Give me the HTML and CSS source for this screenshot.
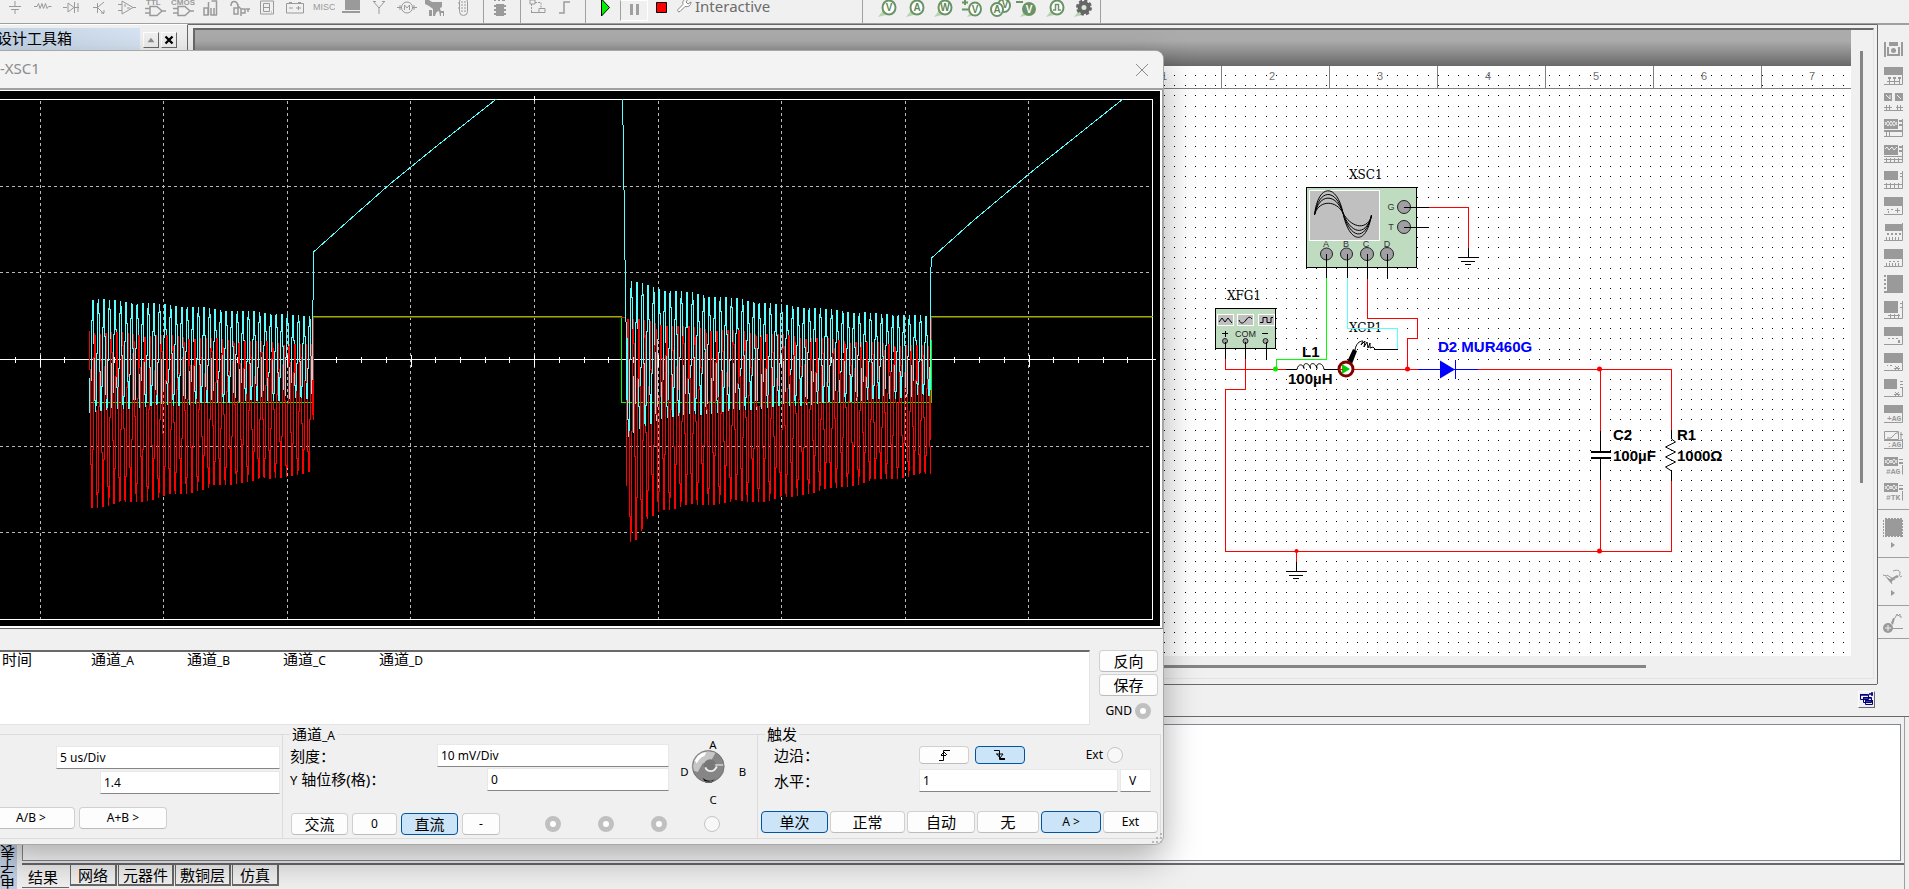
FILE: index.html
```html
<!DOCTYPE html>
<html lang="zh-CN">
<head>
<meta charset="utf-8">
<title>XSC1</title>
<link rel="stylesheet" href="styles.css">
</head>
<body>
<div class="app">
  <header class="toolbar">
    <svg class="tool" viewBox="0 0 24 22"><path d="M12 1v5M6 6.500h12M8 9.500h8M12 10v4"/></svg>
    <svg class="tool" viewBox="0 0 24 22"><path d="M3 6.500h3l1.500-3 1.500 5 2-5 1.500 5 2-5 1.500 5 1.500-2h3"/></svg>
    <svg class="tool" viewBox="0 0 24 22"><path d="M4 7.500h4M9 3v9l6-4.500zM15.500 2v11M16 7.500h4M19 3v9"/></svg>
    <svg class="tool" viewBox="0 0 24 22"><path d="M6 7.500h4M10.500 3v10M11 7l6-5M11 8l6 6M14 13h3v-3"/></svg>
    <svg class="tool" viewBox="0 0 24 22"><path d="M3 4.500h4M3 10.500h4M7 1v13l11-6.500zM18 7.500h3M10 4v3M12 8h3"/></svg>
    <svg class="tool" viewBox="0 0 24 22"><text x="3" y="5" class="tiny">TTL</text><path stroke-width="1.500" d="M2 8.500h5M2 13h5M7 6.500v9h7l5-4.500-5-4.500zM19 11h4"/></svg>
    <svg class="tool" viewBox="0 0 24 22"><text x="0" y="5" class="tiny">CMOS</text><path stroke-width="1.500" d="M2 8.500h5M2 13h5M7 6.500v9h7l5-4.500-5-4.500zM19 11h4"/></svg>
    <svg class="tool" viewBox="0 0 24 22"><path stroke-width="1.500" d="M9.500 2v13M5 8h4v7H5zM12 8v7h3V8M17.500 15V1h-5M15 15h3"/></svg>
    <svg class="tool" viewBox="0 0 24 22"><path stroke-width="1.500" d="M4 6c0-6 6-6 7 0l3 3M7 8h4v6H7zM11 4v10M14 9v7M14 9h4v4h-4M19 9h4M21 9v3"/></svg>
    <svg class="tool" viewBox="0 0 24 22"><path d="M5.500 1h13v13h-13zM8.500 3.500h6v8h-6zM9 7.500h6M16 12h1"/></svg>
    <svg class="tool" viewBox="0 0 24 22"><path d="M3.500 3.500h17v9.500h-17zM6 2.500h3M15 2.500h3M6 8h4M13 8h5M15.500 6v4"/></svg>
    <svg class="tool" viewBox="0 0 24 22"><text x="2" y="10" class="misc">MISC</text></svg>
    <svg class="tool" viewBox="0 0 24 22"><path class="solid" d="M6 0h15v10H6zM3 11h18v2H3z"/></svg>
    <svg class="tool" viewBox="0 0 24 22"><path d="M12 7v7M6 1l6 7 6-7M6 1.500h3M15 1.500h3"/></svg>
    <svg class="tool" viewBox="0 0 24 22"><circle cx="12" cy="7.500" r="5.500"/><path d="M2 7.500h5M17 7.500h5M9.500 10V5l2.500 3 2.500-3v5M5 5v5M19 5v5"/></svg>
    <svg class="tool" viewBox="0 0 24 22"><path class="solid" d="M2 0h4l3 2h10v5l-2 1 1 4-3-1-2 2-1 3h-2V9L6 6l-4-2zM6 10h3v6H6zM16 11h5v5h-1v-3h-2v3h-1z"/></svg>
    <svg class="tool" viewBox="0 0 24 22"><rect x="8.500" y="-2.500" width="8" height="18" rx="4"/><path d="M10 2h2M13 2h2M10 5h2M13 5h2M10 8h2M13 8h2M10 11h2M13 11h2M7 3h1M7 8h1"/></svg>
    <i class="sep"></i>
    <svg class="tool" viewBox="0 0 24 22"><path class="solid" d="M8 4h8v12H8zM6 5h2v2H6zM6 9h2v2H6zM6 13h2v2H6zM16 5h2v2h-2zM16 9h2v2h-2zM16 13h2v2h-2zM6 0h2v1H6zM10 0h2v1h-2zM14 0h3v1h-3z"/></svg>
    <i class="sep"></i>
    <svg class="tool" viewBox="0 0 24 22"><path d="M5 0h5v4H5zM14 8.500h6v4h-6zM6 12.500h8"/><path stroke-dasharray="2 1" d="M6.500 4v8M10 2.500h6v6"/></svg>
    <svg class="tool" viewBox="0 0 24 22"><path stroke-width="1.500" d="M6 13h5V2h6"/></svg>
    <i class="sep"></i>
    <button class="run" aria-label="运行"><svg viewBox="0 0 24 22"><path d="M7.500-1v17l8-8.500z" fill="#00f000" stroke="#000"/></svg></button>
    <button class="run pause" aria-label="暂停"><svg viewBox="0 0 24 22"><path d="M8 3h3v11H8zM14 3h3v11h-3z" fill="#a0a0a0"/></svg></button>
    <button class="run" aria-label="停止"><svg viewBox="0 0 24 22"><path d="M6.500 2.500h10v10h-10z" fill="#f00" stroke="#000"/></svg></button>
    <button class="mode"><svg viewBox="0 0 16 22"><path d="M2 9.500l5-5C6 1 8-1 12-1l-2 3 2 2 3-2c0 4-3 5-6 4.500l-5 5c-2 1-3-1-2-2z" fill="#fff" stroke="#858585"/></svg>Interactive</button>
    <i class="sep"></i>
    <div class="probes">
      <svg class="probe" viewBox="0 0 24 22"><path class="tail" d="M2 17l7-9 5 6z"/><ellipse cx="13" cy="7.500" rx="6.500" ry="7"/><text x="13" y="11">V</text></svg>
      <svg class="probe" viewBox="0 0 24 22"><path class="tail" d="M2 17l7-9 5 6z"/><ellipse cx="13" cy="7.500" rx="6.500" ry="7"/><text x="13" y="11">A</text></svg>
      <svg class="probe" viewBox="0 0 24 22"><path class="tail" d="M2 17l7-9 5 6z"/><ellipse cx="13" cy="7.500" rx="6.500" ry="7"/><text x="13" y="11">W</text></svg>
      <svg class="probe" viewBox="0 0 24 22"><path d="M2 2.500h6M5 0v5M2 9.500h6"/><path class="tail" d="M7 17l7-9 5 6z"/><ellipse cx="15" cy="9" rx="6" ry="6.500"/><text x="15" y="13">V</text></svg>
      <svg class="probe" viewBox="0 0 24 22"><ellipse cx="16" cy="5.500" rx="6" ry="6.500"/><text x="17" y="8">V</text><ellipse cx="9" cy="9.500" rx="6" ry="6.500"/><text x="9" y="13">A</text></svg>
      <svg class="probe" viewBox="0 0 24 22"><path d="M0 2h7" stroke-width="2"/><path class="tail" d="M4 17l7-9 5 6z"/><ellipse class="dark" cx="13" cy="9" rx="6" ry="6"/><text class="light" x="13" y="13">V</text></svg>
      <svg class="probe" viewBox="0 0 24 22"><path class="tail" d="M2 17l7-9 5 6z"/><ellipse cx="13" cy="7.500" rx="6.500" ry="7"/><path stroke-width="1.500" d="M9 10h2.500V4.500h3V10H17"/></svg>
      <svg class="probe" viewBox="0 0 24 22"><path class="tail" d="M2 17l7-9 5 6z"/><circle class="gear" cx="12" cy="7.500" r="4.500"/><circle class="teeth" cx="12" cy="7.500" r="6.500"/></svg>
    </div>
  </header>

  <main class="body">
    <aside class="toolbox">
      <div class="caption"><h2>设计工具箱</h2></div>
      <button class="mini" aria-label="折叠"><svg viewBox="0 0 12 12"><path d="M3 8l3-4 3 4z" fill="#909090"/></svg></button>
      <button class="mini" aria-label="关闭"><svg viewBox="0 0 12 12"><path d="M3 3l6 6M9 3l-6 6" stroke="#000" stroke-width="2"/></svg></button>
    </aside>
    <section class="workspace">
      <div class="canvas">
        <div class="backdrop"></div>
        <svg class="sheet">
          <g transform="translate(-195 -66)">
            <g id="dots" fill="#000"></g>
            <g class="ruler">
              <path d="M195 88.500H2400M1221.500 66v22M1329.500 66v22M1437.500 66v22M1545.500 66v22M1653.500 66v22M1761.500 66v22"/>
              <text x="1164" y="80">1</text><text x="1272" y="80">2</text><text x="1380" y="80">3</text><text x="1488" y="80">4</text><text x="1596" y="80">5</text><text x="1704" y="80">6</text><text x="1812" y="80">7</text>
            </g>
            <g class="wire red">
              <path d="M1429 207.500h39.500v41M1367.500 279v39.500h50v20h-10v31M1225.500 359v10.500h61M1245.500 359v30.500h-20v162h446V481M1354 369.500h64M1478 369.500h193.500V430M1600.500 369v62M1600.500 480v71M1296.500 551v11"/>
            </g>
            <path class="wire green" d="M1326.500 278v81.500h-50v10"/>
            <text class="inst" x="1349" y="332">XCP1</text>
            <path class="wire cyan" d="M1347.500 278v50.500h50v21"/>
            <path class="wire blue" d="M1418 369.500h60M1455.500 360v19"/>
            <path d="M1440 360.500v18l15-9z" fill="#00f"/>
            <g class="wire black">
              <path d="M1468.500 248v9M1458 257.500h21M1461 261.500h14M1465 264.500h6M1296.500 562v9M1286 571.500h21M1289 575.500h14M1293 578.500h6M1286 369.500h11M1324 369.500h14M1671.500 430v9M1671.500 471v10M1600.500 431v21M1600.500 459v21M1374 349.500h24"/>
              <path stroke-width="2" d="M1591 452h20M1591 458h20"/>
            </g>
            <path class="curve" d="M1297 369.500c1-6 6-6 7-1c-2-6 5-7 6.500 0c-2-6 5-7 6.500 0c-2-6 6-7 7 1"/>
            <path class="curve" d="M1671.500 439l4 3-10 5 10 5-10 5 10 5-10 5 6 4"/>
            <g fill="#f00"><circle cx="1407.500" cy="369" r="2.500"/><circle cx="1599.500" cy="369" r="2.500"/><circle cx="1599.500" cy="551" r="2.500"/><circle cx="1296.500" cy="551" r="2"/></g>
            <circle cx="1275.500" cy="369" r="2.500" fill="#0e0"/>
            <path d="M1346 364l7-15 4 2-5 13z"/>
            <path class="curve" d="M1355 350c1-6 4-9 8-9l-2 4 4-4-1 6 3-5 1 6 2-5v5l3-1 2 2"/>
            <circle cx="1346" cy="369" r="7" fill="#fff" stroke="#800000" stroke-width="3"/>
            <path d="M1342 364v10l8-5z" fill="#0c0"/>
            <path d="M1339 369.500h4" stroke="#f00"/>

            <rect class="box" x="1306.500" y="187.500" width="110" height="80"/>
            <rect class="lcd" x="1309.500" y="190.500" width="70" height="50"/>
            <path class="curve" d="M1314.500 215C1318 183 1337 183 1343 213S1366 247 1371.500 215M1314.500 215C1319 188 1336 188 1343 213S1365 243 1371.500 215M1315 214C1319 193 1336 193 1343 213S1365 238 1371.500 216M1315 213C1320 200 1336 200 1343 213S1365 232 1371.500 217"/>
            <g class="jack">
              <circle cx="1404" cy="207" r="6.500"/><circle cx="1404" cy="227" r="6.500"/>
              <circle cx="1326.500" cy="254" r="6"/><circle cx="1346.500" cy="254" r="6"/><circle cx="1367" cy="254" r="6.500"/><circle cx="1387" cy="254" r="6.500"/>
            </g>
            <path class="wire black" d="M1404 207.500h25M1404 227.500h25M1326.500 254v24M1347.500 254v24M1367.500 254v25M1387.500 254v25"/>
            <g class="pin"><text x="1391" y="210">G</text><text x="1391" y="230">T</text><text x="1326" y="247">A</text><text x="1346" y="247">B</text><text x="1366" y="247">C</text><text x="1387" y="247">D</text></g>
            <rect class="box" x="1215.500" y="308.500" width="60" height="40"/>
            <rect class="lcd" x="1217.500" y="314.500" width="16" height="11"/><rect class="lcd" x="1237.500" y="314.500" width="16" height="11"/><rect class="lcd" x="1258.500" y="314.500" width="16" height="11"/>
            <path class="curve" d="M1219 322l3-4 3 4 3-4 4 5M1239 320c2 5 5 3 7 0s4-4 6-1M1260 322.500h3v-5h4v5h4v-5h2"/>
            <g class="jack"><circle cx="1225" cy="341" r="2.500"/><circle cx="1245.500" cy="341" r="2.500"/><circle cx="1265.500" cy="341" r="2.500"/></g>
            <path class="wire black" d="M1225.500 342v17M1245.500 342v17M1266.500 342v17M1222 333.500h6M1225.500 331v6M1262 333.500h6"/>
            <text class="com" x="1245.500" y="337">COM</text>
            <text class="inst" x="1349" y="179">XSC1</text>
            <text class="inst" x="1227" y="300">XFG1</text>
            <g class="part">
              <text x="1302" y="357">L1</text><text x="1288" y="384">100µH</text>
              <text x="1438" y="352" fill="#00f">D2 MUR460G</text>
              <text x="1613" y="440">C2</text><text x="1613" y="461">100µF</text>
              <text x="1677" y="440">R1</text><text x="1677" y="461">1000Ω</text>
            </g>
          </g>
        </svg>
        <div class="vbar"><i></i></div>
        <div class="hbar"><i></i></div>
      </div>
      <div class="status"><button class="cascade" aria-label="窗口"><svg viewBox="0 0 15 15"><path d="M1.500 2.500h8v5h-8zM4.500 5.500h8v5h-8zM6.500 8.500h7v4h-7z" fill="#f0f0f0" stroke="#000080"/><path d="M1 3h8M4 6h8M6 9h8M10 2h4M13 0v4" stroke="#000080" stroke-width="1.500"/></svg></button></div>
    </section>
    <nav class="instruments">
      <div class="strip">
        <svg viewBox="0 0 19 18"><path d="M0 1h2v15H0zM17 1h2v14h-2zM5 1h9v4H5zM3 6h2v9H3zM14 6h2v9h-2zM5 13h9v2H5z"/><circle cx="9.500" cy="9.500" r="2.500"/></svg>
        <svg viewBox="0 0 19 18"><path d="M0 0h19v8H0zM4 10h3v2H4zM9 10h3v2H9zM14 10h3v2h-3zM3 14h13v1H3zM5 12h1v5H5zM10 12h1v5h-1zM15 12h1v5h-1z"/><path class="edge" d="M18.500 8v9.500H0"/></svg>
        <svg viewBox="0 0 19 18"><path d="M0 0h8v8H0zM11 0h8v8h-8zM0 14h8v1H0zM12 14h7v1h-7zM2 12h1v5H2zM5 12h1v5H5zM13 12h1v5h-1zM16 12h1v5h-1z"/><path class="hole" d="M2 2l4 4V2M13 2l4 4"/><path class="edge" d="M0 17.500h19"/></svg>
        <svg viewBox="0 0 19 18"><path d="M0 0h14v10H0zM15 1h4v2h-4zM15 5h4v2h-4zM0 11h19v2H0zM2 13h1v4H2zM5 13h1v4H5z"/><path class="hole" d="M1 3l3 4 3-5 3 5 3-4M1 6l3-4 3 5 3-5 3 4"/><path class="edge" d="M18.500 0v17.500H0"/></svg>
        <svg viewBox="0 0 19 18"><path d="M0 0h14v10H0zM15 1h4v2h-4zM15 5h4v2h-4zM0 11h19v1H0zM2 13h1v4H2zM6 13h1v4H6zM10 13h1v4h-1zM14 13h1v4h-1z"/><path class="hole" d="M1 4l2-2 2 3 3-3 2 3 3-3"/><path class="edge" d="M18.500 0v17.500H0M0 14.500h19"/></svg>
        <svg viewBox="0 0 19 18"><path d="M0 0h14v9H0zM16 2h3v1h-3zM16 5h3v1h-3zM2 12h1v5H2zM6 12h1v5H6zM10 12h1v5h-1zM14 12h1v5h-1z"/><path class="edge" d="M18.500 0v17.500H0M0 13.500h19"/></svg>
        <svg viewBox="0 0 19 18"><path d="M0 0h19v9H0zM3 12h2v1H3zM7 12h2v1H7zM11 13h5v1h-5zM13 11h1v5h-1zM4 14h1v2H4z"/><path class="edge" d="M18.500 9v8.500H0"/></svg>
        <svg viewBox="0 0 19 18"><path d="M1 1h17v7H1zM3 10h2v2H3zM7 10h2v2H7zM11 10h2v2h-2zM15 10h2v2h-2zM2 14h1v4H2zM5 14h1v4H5zM8 14h1v4H8zM11 14h1v4h-1zM14 14h1v4h-1z"/><path class="edge" d="M18.500 0v17.500H0"/></svg>
        <svg viewBox="0 0 19 18"><path d="M0 0h19v10H0zM5 12h2v1H5zM9 12h2v1H9zM13 12h2v1h-2zM2 14h1v4H2zM5 14h1v4H5zM8 14h1v4H8zM11 14h1v4h-1zM14 14h1v4h-1z"/><path class="edge" d="M18.500 9v8.500H0"/></svg>
        <svg viewBox="0 0 19 18"><path d="M3 0h16v18H3zM0 0h2v2H0zM0 4h2v2H0zM0 8h2v2H0zM0 12h2v2H0zM0 16h3v2H0z"/></svg>
        <svg viewBox="0 0 19 18"><path d="M0 0h14v12H0zM16 2h3v1h-3zM16 6h3v1h-3zM4 14h12v1H4zM6 13h1v4H6zM10 13h1v4h-1zM14 13h1v4h-1z"/><path class="edge" d="M18.500 0v17.500H0"/></svg>
        <svg viewBox="0 0 19 18"><path d="M0 0h19v9H0zM4 11h2v1H4zM8 11h2v1H8zM12 11h2v1h-2zM14 13h2v3h-2z"/><path class="edge" d="M18.500 9v8.500H0"/></svg>
        <svg viewBox="0 0 19 18"><path d="M0 0h19v10H0zM3 12h1v1H3zM6 12h2v1H6z"/><path class="edge" d="M18.500 9v8.500H0M10 15.500h6M11 13l4 4M15 13l-4 4"/></svg>
        <svg viewBox="0 0 19 18"><path d="M0 0h13v10H0zM16 2h3v1h-3zM16 5h3v1h-3zM16 8h3v1h-3z"/><path class="edge" d="M18.500 9v8.500H0M10 15.500h6M11 13l4 4M15 13l-4 4"/></svg>
        <svg viewBox="0 0 19 18"><path d="M0 0h19v8H0z"/><text x="3" y="16">+AG</text><path class="edge" d="M18.500 8v9.500H0"/></svg>
        <svg viewBox="0 0 19 18"><path class="edge" d="M.500.500h14v8H.500zM3 7h4l5-5h3M16 3.500h3M17 1v9M18.500 8v9.500H0M0 9.500h18"/><text x="3" y="16">:AG</text></svg>
        <svg viewBox="0 0 19 18"><path d="M0 0h14v9H0zM15 2h4v1h-4zM15 5h4v2h-4z"/><path class="hole" d="M1 3l3 4 3-4 3 4 3-4M1 6l3-4 3 4 3-4 3 4"/><text x="2" y="17">#AG</text><path class="edge" d="M18.500 8v9.500"/></svg>
        <svg viewBox="0 0 19 18"><path d="M0 0h14v9H0zM15 2h4v1h-4zM15 5h4v2h-4z"/><path class="hole" d="M1 3l3 4 3-4 3 4 3-4M1 6l3-4 3 4 3-4 3 4"/><text x="2" y="17">#TK</text><path class="edge" d="M18.500 8v9.500"/></svg>
      </div>
      <div class="extra"><svg viewBox="0 0 20 32"><path d="M2 1h17v17H2z"/><path class="dash" d="M2 .500h17M2 18.500h17M.500 2v17M19.500 2v17"/><path d="M8 24l4 3-4 3z"/></svg></div>
      <div class="extra"><svg viewBox="0 0 20 32"><path d="M2 10l5 3 7-4 2 2-5 2-3 4-2-2z"/><path class="edge" d="M10 5c5-2 9 0 6 5M0 9l4 1M17 11l2-1M4 9l8 5M6 13l3 5"/><path d="M8 24l4 3-4 3z"/></svg></div>
      <div class="extra last"><svg viewBox="0 0 20 32"><circle cx="5" cy="16" r="5"/><path d="M8 11l2-5h2l-2 7z"/><path class="edge" d="M12 6l2-4 1 2 2-2v3h2M8 16.500h12"/><path class="hole" d="M2 16h6M5 13v6"/></svg></div>
    </nav>
  </main>

  <footer class="results">
    <div class="side"><span>电子表格视图</span></div>
    <div class="main">
      <div class="output"></div>
      <div class="tabs"><button class="on">结果</button><button>网络</button><button>元器件</button><button>敷铜层</button><button>仿真</button></div>
    </div>
  </footer>

  <section class="scope" aria-label="XSC1">
    <div class="titlebar"><h1>-XSC1</h1><button class="close" aria-label="关闭"><svg viewBox="0 0 14 14"><path d="M1 1l12 12M13 1L1 13"/></svg></button></div>
    <div class="screen">
      <svg viewBox="0 91 1160 535" preserveAspectRatio="none">
        <path class="grid" d="M0 186.500h1152M0 272.500h1152M0 446.500h1152M0 532.500h1152M40.500 101v518M163.500 101v518M287.500 101v518M410.500 101v518M534.500 101v518M658.500 101v518M781.500 101v518M905.500 101v518M1028.500 101v518"/>
        <path class="frame" d="M0 99.500h1152.500v520H0M0 359.500h1156M534.500 96v5"/>
        <path class="frame" id="ticks"/>
        <path class="ch green" d="M89 402.500h223.500v-86h309v86h310v-86h221"/>
        <path class="ch cyan" id="cyan-back"/>
        <path class="ch red" id="red"/>
        <path class="ch cyan" id="cyan"/>
      </svg>
    </div>
    <div class="readout">
      <table><thead><tr><th><b>时间</b></th><th><b>通道</b>_A</th><th><b>通道</b>_B</th><th><b>通道</b>_C</th><th><b>通道</b>_D</th></tr></thead></table>
      <div class="actions"><button class="btn cjk">反向</button><button class="btn cjk">保存</button><label class="gnd">GND <input type="radio" disabled></label></div>
    </div>
    <div class="groups">
      <fieldset class="time">
        <input class="field rate" aria-label="标度" value="5 us/Div">
        <input class="field shift" aria-label="X 轴位移" value="1.4">
        <div class="buttons"><button class="btn">A/B &gt;</button><button class="btn">A+B &gt;</button></div>
      </fieldset>
      <fieldset class="channel">
        <legend><b>通道</b>_A</legend>
        <div class="upper">
          <div class="rows">
            <div class="row"><label for="scale">刻度：</label><input class="field" id="scale" value="10 mV/Div"></div>
            <div class="row wide"><label for="ypos"><span>Y</span> 轴位移(格)：</label><input class="field" id="ypos" value="0"></div>
          </div>
          <svg class="knob" viewBox="0 0 80 74">
            <g transform="translate(0 -1)">
              <circle cx="35" cy="30" r="17" fill="#868686"/>
              <path d="M18 34C16 20 26 13 35 13l8 2-5 9-9 3-5 9z" fill="#c6c6c6"/>
              <path d="M21 24c2-5 6-9 12-9l-2 4c-4 1-6 4-8 8z" fill="#fff"/>
              <circle cx="37" cy="29" r="6.500" fill="#777"/><path d="M32 31c2 5 9 6 12-1" fill="none" stroke="#eee" stroke-width="2"/>
              <path d="M42 28.500h10" stroke="#fff"/><path d="M29 42c4 4 10 4 13 1l-3 4h-7z"/>
              <circle cx="35" cy="30" r="16.500" fill="none" stroke="#777"/>
            </g>
            <text x="40" y="11">A</text><text x="10" y="39">D</text><text x="71" y="39">B</text><text x="40" y="69">C</text>
          </svg>
        </div>
        <div class="buttons"><button class="btn cjk w57">交流</button><button class="btn w45">0</button><button class="btn cjk w57 on">直流</button><button class="btn w38">-</button>
          <div class="radios"><input type="radio" disabled aria-label="A"><input type="radio" disabled aria-label="B"><input type="radio" disabled aria-label="D"><input type="radio" aria-label="C"></div></div>
      </fieldset>
      <fieldset class="trigger">
        <legend><b>触发</b></legend>
        <div class="row"><label>边沿：</label>
          <button class="btn edge-btn" aria-label="上升沿"><svg viewBox="0 0 14 14"><path d="M2 12.500h4.500V2.500H13M4 7l3-3 3 3M4 7.500h5"/></svg></button>
          <button class="btn edge-btn on" aria-label="下降沿"><svg viewBox="0 0 14 14"><path d="M1 2.500h5.500v9H12M3 6h7l-3 4-3-4M7 10.500h5" /></svg></button>
          <label class="ext">Ext <input type="radio"></label></div>
        <div class="row level"><label for="level">水平：</label><input class="field" id="level" value="1"><input class="field unit" aria-label="单位" value="V"></div>
        <div class="modes"><button class="btn cjk on">单次</button><button class="btn cjk">正常</button><button class="btn cjk">自动</button><button class="btn cjk">无</button><button class="btn on">A &gt;</button><button class="btn">Ext</button></div>
      </fieldset>
    </div>
    <svg class="grip" viewBox="0 0 12 12"><path d="M9 1h2v2H9zM9 5h2v2H9zM5 5h2v2H5zM9 9h2v2H9zM5 9h2v2H5zM1 9h2v2H1z"/></svg>
  </section>
</div>
<script src="app.js"></script>
</body>
</html>
```
FILE: styles.css
```css
* { box-sizing: border-box; }
html, body { height: 100%; margin: 0; }
body { overflow: hidden; background: #f0f0f0; color: #000; font: 12px/16px "Noto Sans", "Noto Sans CJK SC", sans-serif; }
button, input { font: inherit; color: inherit; margin: 0; padding: 0; }
h1, h2 { margin: 0; font-weight: normal; }
b { font-weight: normal; font-size: 15px; }
fieldset { border: 0; margin: 0; padding: 0; min-width: 0; }
svg { display: block; }
.app { position: relative; height: 100%; display: flex; flex-direction: column; }

.toolbar { height: 24px; flex: none; display: flex; align-items: flex-start; padding-left: 3px; border-bottom: 1px solid #a0a0a0; overflow: hidden; }
.tool { width: 24px; height: 22px; margin-right: 4px; flex: none; fill: none; stroke: #9a9a9a; }
.tool .solid { fill: #9a9a9a; stroke: none; }
.tool text { fill: #9a9a9a; stroke: none; font: bold 8px "Liberation Sans", sans-serif; }
.tool .misc { font-size: 9px; font-weight: normal; }
.sep { flex: none; width: 1px; height: 23px; background: #a0a0a0; margin: 0 4px; }
.run { border: 0; background: none; width: 28px; height: 22px; padding: 0 2px; flex: none; }
.run:first-of-type { margin-left: 2px; }
.pause { border: 1px solid #fff; border-left-color: #a0a0a0; padding: 0 1px; height: 21px; }
.mode { border: 0; background: none; display: flex; gap: 3px; padding: 0; width: 182px; font-size: 15px; line-height: 12px; color: #6c6c6c; text-align: left; }
.mode svg { width: 16px; height: 22px; flex: none; }
.probes { display: flex; gap: 4px; padding-left: 9px; padding-right: 4px; border-right: 1px solid #a0a0a0; height: 23px; }
.probe { width: 24px; height: 22px; fill: #fff; stroke: #6b9466; stroke-width: 2; }
.probe .tail { fill: #b7d5b0; stroke: none; }
.probe text { fill: #5f8a5a; stroke: none; font: bold 10px "Liberation Sans", sans-serif; text-anchor: middle; }
.probe .dark { fill: #6b9466; }
.probe .light { fill: #fff; }
.probe .gear { fill: #d8e8d4; stroke: #666; stroke-width: 4; }
.probe .teeth { fill: none; stroke: #666; stroke-width: 3; stroke-dasharray: 3 2; }

.body { flex: 1; min-height: 0; display: flex; }
.toolbox { width: 188px; flex: none; display: flex; gap: 3px; align-items: flex-start; padding-top: 3px; border-top: 1px solid #fff; border-right: 1px solid #696969; }
.caption { width: 140px; height: 24px; overflow: hidden; background: linear-gradient(90deg, #c3d3e4, #d6e3f2); }
.caption h2 { font-size: 15px; line-height: 20px; margin-left: -3px; white-space: nowrap; }
.mini { width: 16px; height: 16px; margin-top: 4px; border: 1px solid; border-color: #fff #696969 #696969 #fff; background: #f0f0f0; }
.mini + .mini { margin-left: -1px; }
.mini svg { width: 14px; height: 14px; }
.workspace { flex: 1; min-width: 0; display: flex; flex-direction: column; border-top: 1px solid #696969; }
.canvas { flex: 1; min-height: 0; display: grid; grid-template: 36px 1fr 22px / 1fr 22px; margin: 3px 3px 5px 5px; border: 2px solid; border-color: #696969 #e3e3e3 #e3e3e3 #696969; border-right-width: 1px; border-bottom-width: 1px; }
.backdrop { background: linear-gradient(#ababab 30%, #696969); }
.sheet { grid-row: 2; width: 100%; height: 100%; background: #fff; overflow: hidden; }
.vbar { grid-row: 1 / 3; grid-column: 2; padding: 21px 0 173px 9px; }
.vbar i { display: block; width: 3px; height: 100%; background: #858585; }
.hbar { grid-row: 3; padding: 9px 205px 0 20px; }
.hbar i { display: block; height: 3px; background: #858585; }
.status { height: 32px; flex: none; border-top: 1px solid #696969; display: flex; justify-content: flex-end; padding: 6px 2px 0 0; }
.cascade { width: 17px; height: 17px; background: #f0f0f0; border: 1px solid; border-color: #fff #696969 #696969 #fff; }

.ruler path { stroke: #808080; }
.ruler text { fill: #707070; font: 11px "Liberation Sans", sans-serif; text-anchor: middle; }
.wire { fill: none; shape-rendering: crispEdges; }
.red { stroke: #f00; }
.green { stroke: #0f0; }
.cyan { stroke: #5ff; }
.blue { stroke: #00f; }
.black { stroke: #000; }
.curve { fill: none; stroke: #000; }
.box { fill: #c0dcc0; stroke: #000; }
.lcd { fill: #c0c0c0; stroke: #fff; }
.jack { fill: #a0a0a4; stroke: #222; }
.pin { fill: #333; font: 9px "Liberation Sans", sans-serif; text-anchor: middle; }
.com { fill: #222; font: 9px "Liberation Sans", sans-serif; text-anchor: middle; }
.inst { font: 12px "DejaVu Serif", serif; }
.part { font: bold 15px "Liberation Sans", sans-serif; }

.instruments { width: 32px; flex: none; border-left: 1px solid #696969; border-top: 1px solid #a0a0a0; display: flex; flex-direction: column; fill: #9a9a9a; margin-bottom: 32px; }
.strip { display: flex; flex-direction: column; gap: 8px; padding: 16px 0 8px 6px; }
.strip svg { width: 19px; height: 18px; }
.strip text { font: bold 8px "Liberation Mono", monospace; }
.edge { fill: none; stroke: #9a9a9a; }
.hole { fill: none; stroke: #f0f0f0; }
.dash { stroke: #9a9a9a; stroke-dasharray: 2 1; }
.extra { border-top: 1px solid #a0a0a0; padding: 8px 0 7px 5px; }
.extra svg { width: 20px; height: 32px; }
.last { border-bottom: 1px solid #a0a0a0; padding: 6px 0 0 5px; height: 34px; overflow: hidden; }

.results { height: 173px; flex: none; display: flex; border-top: 1px solid #696969; padding-right: 4px; }
.side { width: 17px; flex: none; margin-right: 5px; background: #c0cfe2; display: flex; justify-content: center; align-items: flex-end; overflow: hidden; }
.side span { writing-mode: vertical-rl; transform: rotate(180deg); font-size: 15px; line-height: 17px; white-space: nowrap; }
.main { flex: 1; min-width: 0; display: flex; flex-direction: column; padding-top: 7px; border-right: 1px solid #a0a0a0; }
.output { flex: 1; background: #fff; border: 1px solid #828790; margin-right: 3px; }
.tabs { height: 26px; display: flex; gap: 1px; align-items: flex-start; border-top: 2px solid #696969; margin-top: 2px; }
.tabs button { height: 21px; min-width: 47px; padding: 0 4px; border: 1px solid #696969; border-width: 0 2px 2px 1px; background: #f0f0f0; font-size: 15px; line-height: 18px; white-space: nowrap; }
.tabs .on { height: 23px; padding: 2px 11px 0 6px; border: 0; border-bottom: 1px solid #696969; }

.scope { position: absolute; left: 0; top: 51px; right: 746px; bottom: 45px; display: flex; flex-direction: column; background: #f0f0f0; border-radius: 0 8px 8px 0; box-shadow: 0 0 0 1px #a8a8a8, 0 14px 36px rgba(0, 0, 0, .34); }
.titlebar { height: 37px; flex: none; display: flex; justify-content: space-between; align-items: center; background: #f3f3f3; border-radius: 0 8px 0 0; padding-right: 14px; }
.titlebar h1 { font-size: 15px; line-height: 20px; padding-bottom: 3px; color: #8c8c8c; }
.close { width: 14px; height: 14px; border: 0; background: none; }
.close svg { stroke: #8c8c8c; stroke-width: 1; }
.screen { flex: 1; min-height: 0; border: solid #a0a0a0; border-width: 2px 1px 1px 0; border-bottom-color: #696969; padding: 1px 2px 2px 0; background: #fff; }
.screen svg { width: 100%; height: 100%; background: #000; fill: none; shape-rendering: crispEdges; }
.grid { stroke: #b8b8b8; stroke-dasharray: 3 3; }
.frame { stroke: #fff; }

.readout { flex: none; display: flex; gap: 9px; padding: 21px 5px 0 0; height: 96px; }
.readout table { flex: 1; height: 75px; display: block; background: #fff; border: 1px solid #e3e3e3; border-top: 2px solid #696969; border-left: 0; border-spacing: 0; }
.readout th { width: 96px; padding: 0; text-align: left; font-weight: normal; line-height: 14px; }
.readout th:first-child { width: 91px; padding-left: 2px; }
.actions { width: 59px; display: flex; flex-direction: column; gap: 2px; }
.btn { height: 22px; border: 1px solid #d0d0d0; border-bottom-color: #bcbcbc; border-radius: 4px; background: #fdfdfd; line-height: 18px; text-align: center; white-space: nowrap; }
.btn.cjk { font-size: 15px; }
.btn.on { background: #cce4f7; border-color: #0054a0; }
.gnd { display: flex; align-items: center; justify-content: flex-end; gap: 3px; margin-top: 5px; padding-right: 7px; }
input[type=radio] { appearance: none; width: 16px; height: 16px; border: 1px solid #c4c4c4; border-radius: 50%; background: #f8f8f8; }
input[type=radio]:disabled { border: 5px solid #c0c0c0; background: #fff; }
.groups { flex: none; display: grid; grid-template-columns: 283fr 475fr 403fr; height: 119px; padding: 0 2px 5px 0; }
.groups fieldset { border: 2px solid #dcdcdc; border-left: 0; border-width: 1px 1px 1px 0; display: flex; flex-direction: column; }
.field { border: 1px solid #e8e8e8; border-bottom: 1px solid #868686; background: #fff; height: 23px; padding: 0 3px; border-radius: 0; min-width: 0; }
.time { margin-top: 9px; padding: 11px 2px 0 0; align-items: stretch; }
.time .rate { margin-left: 56px; }
.time .shift { margin: 2px 0 13px 100px; }
.buttons { display: flex; gap: 4px; }
.time .buttons .btn { width: 88px; }
.time .buttons .btn:first-child { margin-left: -13px; }
legend { height: 18px; line-height: 18px; padding: 0 2px; margin-left: 4px; }
.channel { padding: 0 0 0 7px; }
.channel legend { margin-left: 0; }
.channel .buttons { padding-left: 1px; }
.upper { display: flex; height: 70px; padding-top: 1px; }
.rows { flex: 1; display: flex; flex-direction: column; gap: 1px; }
.row { display: flex; align-items: center; height: 23px; }
.row label { font-size: 15px; flex: none; width: 147px; white-space: nowrap; }
.row.wide label { width: 197px; }
.row label span { font-size: 13px; }
.row .field { flex: 1; }
.knob { width: 80px; height: 74px; margin: -7px 6px 0; }
.knob text { font: 12px "Noto Sans", sans-serif; text-anchor: middle; }
.w57 { width: 57px; } .w45 { width: 45px; } .w38 { width: 38px; }
.radios { display: flex; gap: 37px; margin-left: 41px; align-items: center; }
.trigger { padding-left: 3px; }
.trigger .row { padding: 0 9px 0 13px; gap: 6px; }
.trigger .row label { width: 139px; }
.trigger .row.level { gap: 2px; padding-top: 3px; height: 26px; }
.trigger .row.level label { width: 143px; }
.trigger .row .unit { flex: none; width: 31px; padding-left: 8px; }
.edge-btn { width: 50px; height: 18px; display: flex; justify-content: center; align-items: center; }
.edge-btn svg { width: 14px; height: 14px; fill: none; stroke: #000; }
.trigger .row .ext { width: auto; margin-left: auto; margin-right: 28px; display: flex; align-items: center; gap: 4px; font-size: 12px; }
.modes { display: grid; grid-template-columns: 67fr 75fr 68fr 62fr 60fr 55fr; gap: 2px; margin: 19px 2px 0 0; }
.grip { position: absolute; right: 0; bottom: 0; width: 12px; height: 12px; fill: #b8b8b8; }
```
FILE: app.js
```js
const NS = "http://www.w3.org/2000/svg";

// Sheet grid: one dot every 10 1/8 pixels.
const dots = document.getElementById("dots");
let d = "";
for (let r = -3; ; r++) {
  const y = Math.floor(106 + 10.125 * r);
  if (y > 1400) break;
  for (let c = -161; c < 60; c++) d += `M${Math.floor(1833 + 10.125 * c)} ${y}h1v1h-1z`;
}
const dotPath = document.createElementNS(NS, "path");
dotPath.setAttribute("d", d);
dots.appendChild(dotPath);

// Axis divisions, five to each grid column.
let t = "";
for (let i = 0; i <= 46; i++) {
  const x = Math.floor(15.5 + i * 24.72) + 0.5;
  t += i % 5 === 1 ? `M${x} 355v12` : `M${x} 357v6`;
}
document.getElementById("ticks").setAttribute("d", t);

function at(points, x) {
  for (let i = 1; i < points.length; i++) {
    const [x0, y0] = points[i - 1], [x1, y1] = points[i];
    if (x <= x1) return y0 + (y1 - y0) * (x - x0) / (x1 - x0);
  }
  return points[points.length - 1][1];
}

// One vertical run per pixel column, joining neighbouring samples.
// Every column whose index divides by `skip` is left out.
function ringing(from, to, top, bottom, peak, period, skip) {
  const sample = x => {
    const a = at(top, x), b = at(bottom, x);
    return Math.round((a + b) / 2 - (b - a) / 2 * Math.cos(2 * Math.PI * (x - peak) / period));
  };
  let s = "";
  for (let x = from; x <= to; x++) {
    if (skip && x % skip === 0) continue;
    const ys = [sample(x), sample(x + 0.5), sample(x + 1)];
    s += `M${x + 0.5} ${Math.min(...ys)}V${Math.max(...ys) + 1}`;
  }
  return s;
}

const P = 5.56;
const cyanBursts = skip =>
  ringing(89, 312, [[89, 298], [200, 307], [312, 316]], [[89, 412], [150, 406], [312, 398]], 92.8, P, skip) +
  ringing(627, 930, [[627, 279], [660, 288], [735, 298], [780, 304], [860, 312], [930, 316]], [[627, 438], [660, 418], [730, 411], [800, 405], [930, 395]], 631.4, P, skip);

document.getElementById("cyan-back").setAttribute("d", cyanBursts(0));
document.getElementById("cyan").setAttribute("d",
  cyanBursts(2) +
  "M312.500 380V300M313.500 300V252L347 222L390 184L438 145L496.500 99" +
  "M622.500 99V125M623.500 125V190M624.500 190V260M625.500 260V322M626.500 322V400" +
  "M930.500 390V267M931.500 267V258L974 220L1035 169L1123 99");
document.getElementById("red").setAttribute("d",
  ringing(89, 312, [[89, 330], [200, 337], [312, 344]], [[89, 508], [150, 500], [230, 484], [312, 473]], 94.7, P, 0) +
  "M313.500 420V317.500H625.500" +
  ringing(626, 930, [[626, 317], [680, 325], [735, 330], [790, 335], [860, 341], [930, 346]], [[626, 543], [638, 541], [648, 520], [660, 510], [700, 505], [776, 500], [830, 489], [885, 479], [930, 474]], 633.4, P, 0) +
  "M930.500 440V340M931.500 340V317.500H1152");
```
